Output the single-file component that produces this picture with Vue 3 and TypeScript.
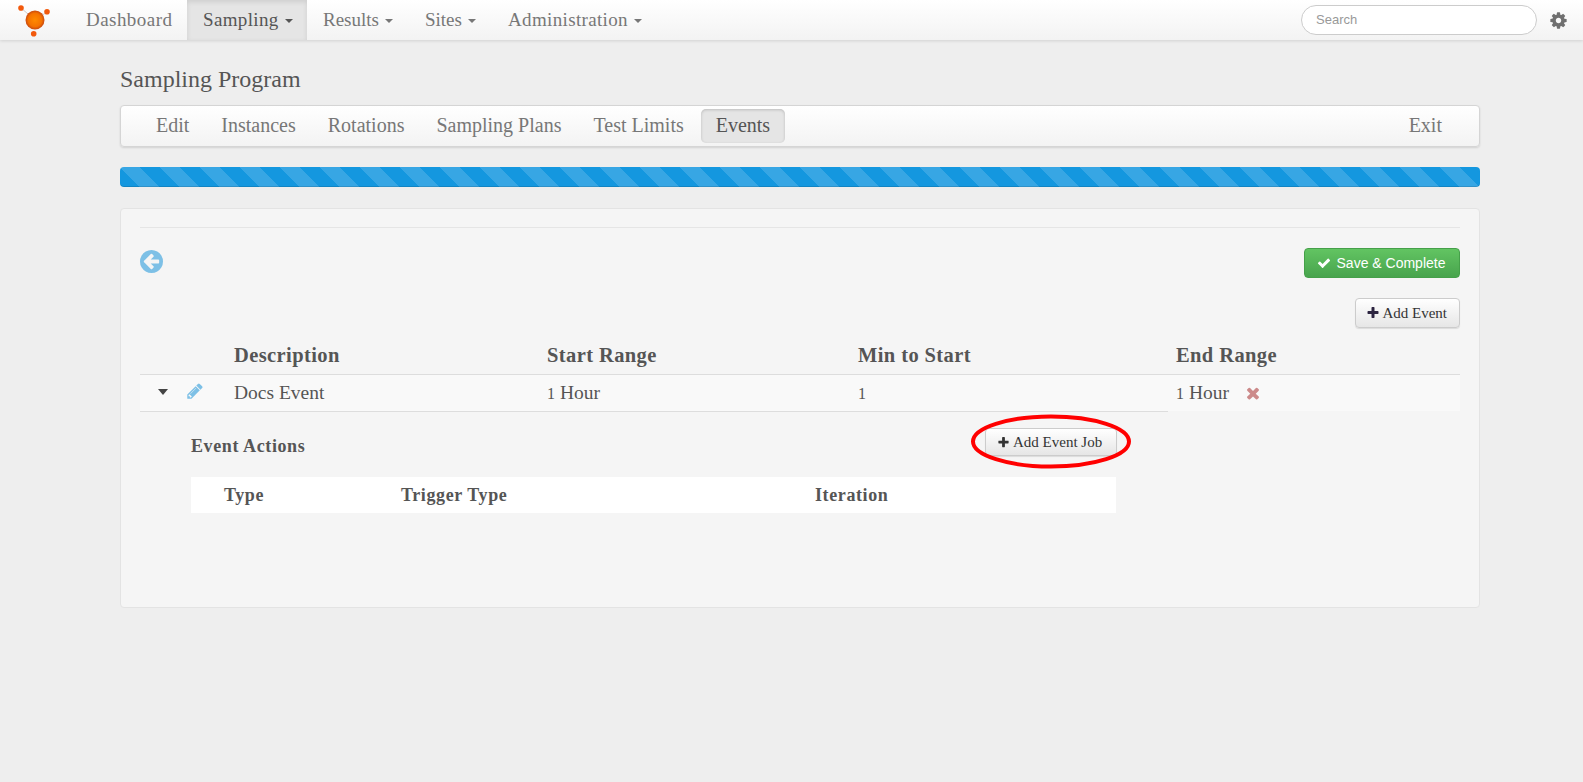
<script setup lang="ts">
const mainNav = [
  { label: "Dashboard", caret: false, active: false, width: 117, spacing: 0.45 },
  { label: "Sampling", caret: true, active: true, width: 120, spacing: 0.35 },
  { label: "Results", caret: true, active: false, width: 102, spacing: 0 },
  { label: "Sites", caret: true, active: false, width: 83, spacing: 0 },
  { label: "Administration", caret: true, active: false, width: 169, spacing: 0.35 },
];

const subNav = ["Edit", "Instances", "Rotations", "Sampling Plans", "Test Limits", "Events"];

const icons = {
  cog: "M1152 896q0-106-75-181t-181-75-181 75-75 181 75 181 181 75 181-75 75-181zm512-109v222q0 12-8 23t-20 13l-185 28q-19 54-39 91 35 50 107 138 10 12 10 25t-9 23q-27 37-99 108t-94 71q-12 0-26-9l-138-108q-44 23-91 38-16 136-29 186-7 28-36 28h-222q-14 0-24.5-8.5t-11.5-21.5l-28-184q-49-16-90-37l-141 107q-10 9-25 9-14 0-25-11-126-114-165-168-7-10-7-23 0-12 8-23 15-21 51-66.5t54-70.5q-27-50-41-99l-183-27q-13-2-21-12.5t-8-23.5v-222q0-12 8-23t19-13l186-28q14-46 39-92-40-57-107-138-10-12-10-24 0-10 9-23 26-36 98.5-107.5t94.5-71.5q13 0 26 10l138 107q44-23 91-38 16-136 29-186 7-28 36-28h222q14 0 24.5 8.5t11.5 21.5l28 184q49 16 90 37l142-107q9-9 24-9 13 0 25 10 129 119 165 170 7 8 7 22 0 12-8 23-15 21-51 66.5t-54 70.5q26 50 41 98l183 28q13 2 21 12.5t8 23.5z",
  plus: "M1600 736v192q0 40-28 68t-68 28h-416v416q0 40-28 68t-68 28h-192q-40 0-68-28t-28-68v-416h-416q-40 0-68-28t-28-68v-192q0-40 28-68t68-28h416v-416q0-40 28-68t68-28h192q40 0 68 28t28 68v416h416q40 0 68 28t28 68z",
  check: "M1671 566q0 40-28 68l-724 724-136 136q-28 28-68 28t-68-28l-136-136-362-362q-28-28-28-68t28-68l136-136q28-28 68-28t68 28l294 295 656-657q28-28 68-28t68 28l136 136q28 28 28 68z",
  times: "M1490 1322q0 40-28 68l-136 136q-28 28-68 28t-68-28l-294-294-294 294q-28 28-68 28t-68-28l-136-136q-28-28-28-68t28-68l294-294-294-294q-28-28-28-68t28-68l136-136q28-28 68-28t68 28l294 294 294-294q28-28 68-28t68 28l136 136q28 28 28 68t-28 68l-294 294 294 294q28 28 28 68z",
  back: "M1408 960v-128q0-26-19-45t-45-19h-502l189-189q19-19 19-45t-19-45l-91-91q-18-18-45-18t-45 18l-362 362-91 91q-18 18-18 45t18 45l91 91 362 362q18 18 45 18t45-18l91-91q18-18 18-45t-18-45l-189-189h502q26 0 45-19t19-45zm256-64q0 209-103 385.5t-279.5 279.5-385.5 103-385.5-103-279.5-279.5-103-385.5 103-385.5 279.5-279.5 385.5-103 385.5 103 279.5 279.5 103 385.5z",
  pencil: "M491 1536l91-91-235-235-91 91v107h128v128h107zm523-928q0-22-22-22-10 0-17 7l-542 542q-7 7-7 17 0 22 22 22 10 0 17-7l542-542q7-7 7-17zm-54-192l416 416-832 832h-416v-416zm683 96q0 53-37 90l-166 166-416-416 166-165q36-38 90-38 53 0 91 38l235 234q37 39 37 91z",
};
</script>

<template>
  <div class="page">
    <header class="navbar">
      <a class="brand">
        <svg width="70" height="40" viewBox="0 0 70 40">
          <defs>
            <radialGradient id="ball" cx="50%" cy="50%" r="50%">
              <stop offset="0%" stop-color="#ff8a00" />
              <stop offset="70%" stop-color="#f57200" />
              <stop offset="100%" stop-color="#c9480e" />
            </radialGradient>
          </defs>
          <line x1="21" y1="8" x2="35" y2="20" stroke="#ccc" stroke-width="1" />
          <line x1="47" y1="12" x2="35" y2="20" stroke="#ccc" stroke-width="1" />
          <circle cx="35" cy="20" r="9.5" fill="url(#ball)" />
          <circle cx="21" cy="8" r="2.8" fill="#f2590c" />
          <circle cx="47" cy="11.7" r="2.8" fill="#f2590c" />
          <circle cx="33.7" cy="33.7" r="2.8" fill="#f2590c" />
        </svg>
      </a>
      <nav class="main-nav">
        <a
          v-for="item in mainNav"
          :key="item.label"
          class="main-link"
          :class="{ active: item.active }"
          :style="{ width: item.width + 'px', letterSpacing: item.spacing + 'px' }"
        >
          {{ item.label }}<span v-if="item.caret" class="caret"></span>
        </a>
      </nav>
      <div class="nav-right">
        <input class="search" type="text" placeholder="Search" />
        <svg class="gear" viewBox="0 0 1792 1792"><path :d="icons.cog" /></svg>
      </div>
    </header>

    <main class="content">
      <h1 class="title">Sampling Program</h1>

      <div class="subnav">
        <a v-for="s in subNav" :key="s" class="sub-link" :class="{ active: s === 'Events' }">{{ s }}</a>
        <a class="sub-link exit">Exit</a>
      </div>

      <div class="progress"></div>

      <section class="panel">
        <hr class="rule" />

        <div class="toolbar">
          <svg class="back" viewBox="128 128 1536 1536"><path :d="icons.back" /></svg>
          <button class="btn btn-success">
            <svg class="ic" viewBox="0 0 1792 1792"><path :d="icons.check" /></svg>Save &amp; Complete
          </button>
        </div>

        <div class="add-row">
          <button class="btn btn-default">
            <svg class="ic plus-dark" viewBox="0 0 1792 1792"><path :d="icons.plus" /></svg>Add Event
          </button>
        </div>

        <table class="events">
          <colgroup>
            <col style="width: 94px" />
            <col style="width: 313px" />
            <col style="width: 311px" />
            <col style="width: 310px" />
            <col />
          </colgroup>
          <thead>
            <tr>
              <th></th>
              <th>Description</th>
              <th>Start Range</th>
              <th>Min to Start</th>
              <th class="last">End Range</th>
            </tr>
          </thead>
          <tbody>
            <tr>
              <td class="tools">
                <span class="row-caret"></span>
                <svg class="pencil" viewBox="0 0 1792 1792"><path :d="icons.pencil" /></svg>
              </td>
              <td>Docs Event</td>
              <td><span class="num">1</span> Hour</td>
              <td><span class="num">1</span></td>
              <td class="last">
                <span class="num">1</span> Hour
                <svg class="remove" viewBox="0 0 1792 1792"><path :d="icons.times" /></svg>
              </td>
            </tr>
          </tbody>
        </table>

        <div class="detail">
          <div class="detail-head">
            <h4 class="detail-title">Event Actions</h4>
            <div class="job-wrap">
              <button class="btn btn-default btn-job">
                <svg class="ic ic-job" viewBox="0 0 1792 1792"><path :d="icons.plus" /></svg>Add Event Job
              </button>
              <svg class="mark" width="162" height="57" viewBox="0 0 162 57">
                <ellipse cx="81" cy="28.5" rx="78" ry="25" fill="none" stroke="#f00" stroke-width="4" />
              </svg>
            </div>
          </div>
          <div class="action-head">
            <span class="col-type">Type</span>
            <span class="col-trigger">Trigger Type</span>
            <span>Iteration</span>
          </div>
        </div>
      </section>
    </main>
  </div>
</template>

<style>
html,
body {
  margin: 0;
  background: #eee;
}
</style>

<style scoped>
.page {
  min-height: 782px;
  background: #eeeeee;
  color: #555;
  font-family: "Liberation Serif", Georgia, serif;
}

.navbar {
  height: 40px;
  display: flex;
  align-items: stretch;
  background: linear-gradient(#fff, #f3f3f3);
  box-shadow: 0 1px 3px rgba(0, 0, 0, 0.12);
}

.brand {
  width: 70px;
  height: 40px;
}

.main-nav {
  display: flex;
}

.main-link {
  box-sizing: border-box;
  display: flex;
  align-items: center;
  padding: 0 0 0 16px;
  font-size: 19px;
  color: #777;
}

.main-link.active {
  color: #555;
  background: #e5e5e5;
  box-shadow: inset 0 2px 5px rgba(0, 0, 0, 0.1);
}

.caret {
  width: 0;
  height: 0;
  margin-left: 6px;
  margin-top: 2px;
  border-left: 4px solid transparent;
  border-right: 4px solid transparent;
  border-top: 4px solid currentColor;
}

.nav-right {
  margin-left: auto;
  display: flex;
  align-items: center;
  padding-right: 15px;
}

.search {
  box-sizing: border-box;
  width: 236px;
  height: 30px;
  padding: 0 14px 2px;
  border: 1px solid #ccc;
  border-radius: 15px;
  background: #fff;
  font-family: "Liberation Sans", Arial, sans-serif;
  font-size: 13px;
  outline: none;
}

.search::placeholder {
  color: #999;
}

.gear {
  width: 19px;
  height: 19px;
  margin-left: 12px;
  fill: #707070;
}

.content {
  width: 1360px;
  margin-left: 120px;
}

.title {
  margin: 0;
  padding-top: 25px;
  height: 40px;
  font-size: 24px;
  line-height: 28px;
  font-weight: 400;
  color: #555;
}

.subnav {
  box-sizing: border-box;
  height: 42px;
  display: flex;
  align-items: center;
  gap: 2px;
  padding: 0 22px 0 20px;
  border: 1px solid #d5d5d5;
  border-radius: 4px;
  background: linear-gradient(#fff, #f3f3f3);
  box-shadow: 0 1px 2px rgba(0, 0, 0, 0.12);
}

.sub-link {
  padding: 0 15px;
  height: 34px;
  line-height: 33px;
  border-radius: 5px;
  font-size: 20px;
  color: #777;
}

.sub-link.active {
  color: #555;
  background: #e5e5e5;
  box-shadow: inset 0 1px 3px rgba(0, 0, 0, 0.18);
}

.sub-link.exit {
  margin-left: auto;
}

.progress {
  height: 20px;
  margin-top: 20px;
  border-radius: 4px;
  background-color: #1497df;
  background-image: linear-gradient(45deg, rgba(255, 255, 255, 0.15) 25%, transparent 25%, transparent 50%, rgba(255, 255, 255, 0.15) 50%, rgba(255, 255, 255, 0.15) 75%, transparent 75%, transparent);
  background-size: 40px 40px;
  box-shadow: inset 0 -1px 0 rgba(0, 0, 0, 0.12);
}

.panel {
  box-sizing: border-box;
  height: 400px;
  margin-top: 21px;
  padding: 18px 19px 0 19px;
  background: #f5f5f5;
  border: 1px solid #e3e3e3;
  border-radius: 4px;
}

.rule {
  height: 1px;
  margin: 0;
  border: 0;
  background: #e5e5e5;
}

.toolbar {
  display: flex;
  justify-content: space-between;
  align-items: flex-start;
  margin-top: 20px;
}

.back {
  width: 23px;
  height: 23px;
  margin-top: 2px;
  fill: #7dc0e6;
}

.btn {
  box-sizing: border-box;
  display: inline-flex;
  align-items: center;
  height: 30px;
  padding: 0 12px 0 10px;
  border-radius: 4px;
  font-size: 15px;
  cursor: pointer;
}

.btn-success {
  width: 156px;
  justify-content: center;
  color: #fff;
  font-family: "Liberation Sans", Arial, sans-serif;
  font-size: 14px;
  border: 1px solid #45a049;
  background: linear-gradient(#62c462, #48a44d);
}

.btn-default {
  color: #333;
  border: 1px solid #ccc;
  background: linear-gradient(#fff, #e6e6e6);
  box-shadow: 0 1px 1px rgba(0, 0, 0, 0.1);
  font-family: "Liberation Serif", Georgia, serif;
}

.ic {
  width: 14px;
  height: 14px;
  margin-right: 2px;
  fill: currentColor;
}

.btn-success .ic {
  margin-right: 6px;
}

.plus-dark {
  fill: #2c2440;
}

.add-row {
  display: flex;
  justify-content: flex-end;
  margin-top: 20px;
}

.events {
  width: 100%;
  margin-top: 9px;
  border-collapse: collapse;
  table-layout: fixed;
  font-size: 19.5px;
}

.events th {
  height: 37px;
  padding: 0;
  text-align: left;
  font-size: 20.5px;
  letter-spacing: 0.4px;
  font-weight: 700;
  border-bottom: 1px solid #ddd;
}

.events td {
  height: 36px;
  padding: 0;
  background: #f9f9f9;
  border-bottom: 1px solid #ddd;
}

.events th.last,
.events td.last {
  padding-left: 8px;
}

.events td.last {
  border-bottom-color: #f5f5f5;
}

.events td.tools {
  padding-left: 18px;
}

.num {
  font-size: 16px;
}

.row-caret {
  display: inline-block;
  width: 0;
  height: 0;
  margin-bottom: 4px;
  vertical-align: middle;
  border-left: 5.5px solid transparent;
  border-right: 5.5px solid transparent;
  border-top: 6px solid #444;
}

.pencil {
  width: 18px;
  height: 18px;
  margin-left: 18px;
  margin-bottom: 5px;
  vertical-align: middle;
  fill: #7dc0e6;
}

.remove {
  width: 18px;
  height: 18px;
  margin-left: 10px;
  vertical-align: -3px;
  fill: #cc8a8a;
}

.detail {
  width: 925px;
  margin-left: 51px;
}

.detail-head {
  display: flex;
  justify-content: space-between;
  align-items: flex-start;
  height: 65px;
}

.detail-title {
  margin: 0;
  padding-top: 24px;
  font-size: 18px;
  letter-spacing: 0.6px;
  line-height: 20px;
  font-weight: 700;
}

.job-wrap {
  position: relative;
  margin-top: 16px;
  margin-right: -1px;
}

.btn-job {
  width: 132px;
  height: 28px;
  padding: 0 6px 0 11px;
  white-space: nowrap;
}

.ic-job {
  width: 13px;
  height: 13px;
  margin-right: 3px;
}

.mark {
  position: absolute;
  left: -15px;
  top: -15px;
  pointer-events: none;
}

.action-head {
  display: flex;
  align-items: center;
  height: 36px;
  padding-left: 33px;
  background: #fff;
  font-size: 18px;
  letter-spacing: 0.6px;
  font-weight: 700;
}

.col-type {
  width: 177px;
}

.col-trigger {
  width: 414px;
}
</style>
